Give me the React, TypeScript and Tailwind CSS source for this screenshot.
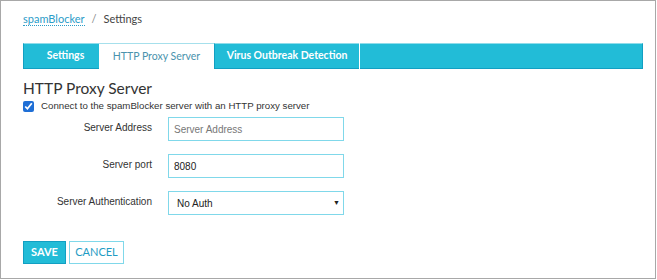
export default function App() {
  return (
    <div className="w-[657px] h-[280px] bg-white">
      <div className="w-[656px] h-[279px] border border-[#a8a8a8] pl-[22px] pt-[10px] font-['Liberation_Sans',Arial,sans-serif] text-[#333]">
        <div className="h-[16px] flex items-center text-[11px] font-['Lato',sans-serif]">
          <span className="text-[#2a9cc8] border-b border-dotted border-[#2a9cc8] leading-[13px]">
            spamBlocker
          </span>
          <span className="mx-[7px] text-[#888]">/</span>
          <span className="text-[#444]">Settings</span>
        </div>

        <div className="mt-[16px] flex h-[26px] w-[620px] text-[10.5px] font-['Lato',sans-serif]">
          <div className="w-[76px] flex items-center justify-center pl-[8px] bg-[#22bcd7] border-l border-b border-[#129fc2] border-t border-t-[#8fdcea] text-white font-bold">
            Settings
          </div>
          <div className="w-[115px] flex items-center justify-center bg-white border-t border-[#a6e0ec] text-[#4a93ad]">
            HTTP Proxy Server
          </div>
          <div className="w-[145px] flex items-center justify-center bg-[#22bcd7] border-b border-l border-[#129fc2] border-t border-t-[#8fdcea] text-white font-bold">
            Virus Outbreak Detection
          </div>
          <div className="ml-px flex-1 bg-[#22bcd7] border-b border-r border-[#129fc2] border-t border-t-[#8fdcea]"></div>
        </div>

        <div className="mt-[9px] text-[15.5px] leading-[20px] font-['Lato',sans-serif] text-[#333]">
          HTTP Proxy Server
        </div>

        <label className="mt-[1px] flex items-center h-[14px] text-[9.7px]">
          <input type="checkbox" defaultChecked className="w-[11px] h-[11px] m-0 mr-[7px] accent-[#1f6fd6]" />
          Connect to the spamBlocker server with an HTTP proxy server
        </label>

        <div className="mt-[4px] flex flex-col gap-[13px] text-[10px]">
          <div className="flex items-center h-[24px]">
            <span className="w-[129px] text-right -mt-[3px]">Server Address</span>
            <input
              placeholder="Server Address"
              className="ml-[16px] w-[176px] h-[24px] border border-[#80d8ea] px-[5px] text-[10px] outline-none placeholder:text-[#777]"
            />
          </div>
          <div className="flex items-center h-[24px]">
            <span className="w-[129px] text-right -mt-[3px]">Server port</span>
            <input
              defaultValue="8080"
              className="ml-[16px] w-[176px] h-[24px] border border-[#80d8ea] px-[5px] text-[10px] text-[#222] outline-none"
            />
          </div>
          <div className="flex items-center h-[24px]">
            <span className="w-[129px] text-right -mt-[3px]">Server Authentication</span>
            <div className="ml-[16px] w-[176px] h-[24px] border border-[#80d8ea] pl-[8px] pr-[3px] flex items-center justify-between text-[10px] text-[#222]">
              <span>No Auth</span>
              <span className="text-[7px] text-[#222]">▼</span>
            </div>
          </div>
        </div>

        <div className="mt-[26px] flex gap-[3px] text-[11px] font-['Lato',sans-serif]">
          <button className="w-[43px] h-[23px] bg-[#22bcd7] border border-[#129fc2] text-white font-bold">
            SAVE
          </button>
          <button className="w-[55px] h-[23px] bg-white border border-[#80d8ea] text-[#1f9cc4]">
            CANCEL
          </button>
        </div>
      </div>
    </div>
  );
}
